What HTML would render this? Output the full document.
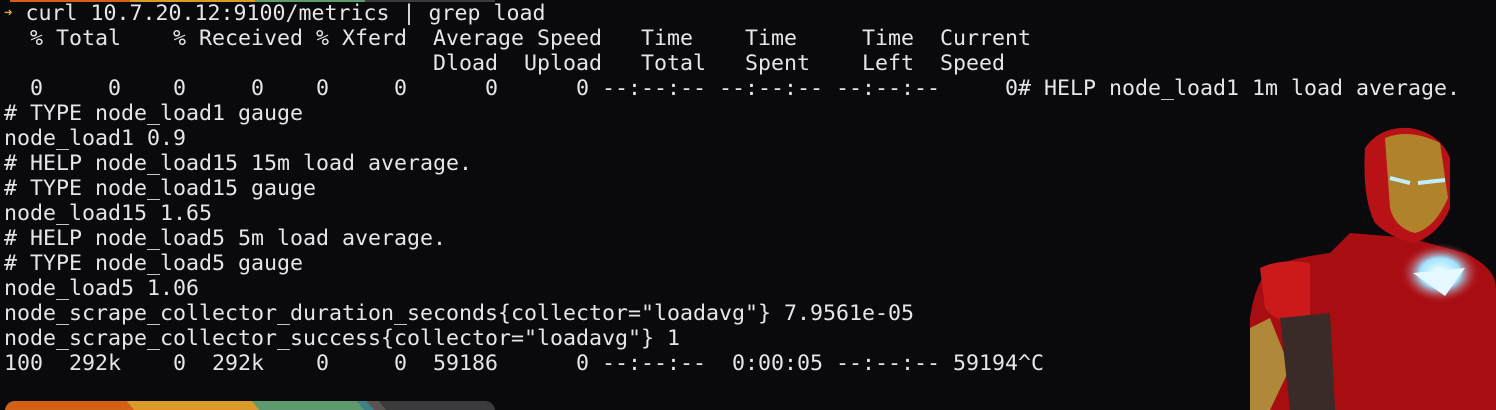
<!DOCTYPE html>
<html><head><meta charset="utf-8"><style>
html,body{margin:0;padding:0;background:#0a0a0d;width:1496px;height:410px;overflow:hidden;position:relative}
pre{margin:0;position:absolute;left:4px;top:1px;font-family:"DejaVu Sans Mono","Liberation Mono",monospace;font-size:21.6px;line-height:25px;color:#e6e6ea;white-space:pre}
.y{color:#d8b23a;font-size:14px;vertical-align:3px}
.bar{position:absolute;height:10px;}
</style></head><body>
<div class="bar" style="top:0;left:10px;width:120px;height:2px;background:#d45f17"></div>
<div class="bar" style="top:0;left:130px;width:125px;height:2px;background:#d99a2a"></div>
<div class="bar" style="top:0;left:255px;width:110px;height:2px;background:#5e9a6e"></div>
<div class="bar" style="top:0;left:365px;width:130px;height:2px;background:#3a3a3c"></div>
<svg style="position:absolute;left:1250px;top:118px" width="246" height="292" viewBox="0 0 246 292">
<defs><radialGradient id="g" cx="0.5" cy="0.5" r="0.5"><stop offset="0" stop-color="#fff"/><stop offset="0.5" stop-color="#9fe3ff"/><stop offset="1" stop-color="#c01010" stop-opacity="0"/></radialGradient></defs>
<path d="M20 150 Q40 140 80 135 L100 115 L160 120 L215 135 Q246 150 246 170 L246 292 L0 292 L0 200 Q5 165 20 150Z" fill="#a80d12"/>
<path d="M115 30 Q130 8 160 10 Q190 15 200 40 L200 90 Q190 115 165 125 Q140 120 125 105 Q112 80 115 30Z" fill="#b81216"/>
<path d="M135 20 Q160 10 190 25 L198 80 Q185 110 165 115 Q145 110 140 90 Z" fill="#b0822c"/>
<path d="M140 60 L160 65 M168 65 L195 62" stroke="#bfefff" stroke-width="4"/>
<path d="M10 150 Q30 140 60 145 L60 200 Q30 210 15 190Z" fill="#cc1a1a"/>
<path d="M0 210 L20 200 L40 250 L20 292 L0 292Z" fill="#b0883a"/>
<path d="M30 200 L80 195 L85 292 L40 292Z" fill="#3a2a28"/>
<ellipse cx="190" cy="155" rx="40" ry="30" fill="url(#g)"/>
<path d="M163 155 L215 150 L195 178Z" fill="#e6f8ff"/>
</svg>
<pre><span class="y">➜</span> curl 10.7.20.12:9100/metrics | grep load
  % Total    % Received % Xferd  Average Speed   Time    Time     Time  Current
                                 Dload  Upload   Total   Spent    Left  Speed
  0     0    0     0    0     0      0      0 --:--:-- --:--:-- --:--:--     0# HELP node_load1 1m load average.
# TYPE node_load1 gauge
node_load1 0.9
# HELP node_load15 15m load average.
# TYPE node_load15 gauge
node_load15 1.65
# HELP node_load5 5m load average.
# TYPE node_load5 gauge
node_load5 1.06
node_scrape_collector_duration_seconds{collector="loadavg"} 7.9561e-05
node_scrape_collector_success{collector="loadavg"} 1
100  292k    0  292k    0     0  59186      0 --:--:--  0:00:05 --:--:-- 59194^C</pre>
<div style="position:absolute;left:5px;top:401px;width:490px;height:20px;border-radius:10px;overflow:hidden;background:#3b3a3c">
<div style="position:absolute;left:0;top:0;width:140px;height:20px;background:#d45f17"></div>
<div style="position:absolute;left:130px;top:0;width:135px;height:20px;background:#d99a2a;transform:skewX(40deg)"></div>
<div style="position:absolute;left:255px;top:0;width:110px;height:20px;background:#5e9a6e;transform:skewX(40deg)"></div>
<div style="position:absolute;left:360px;top:0;width:10px;height:20px;background:#3f7f8a;transform:skewX(40deg)"></div>
<div style="position:absolute;left:370px;top:0;width:12px;height:20px;background:#5a5452;transform:skewX(40deg)"></div>
</div>
</body></html>
